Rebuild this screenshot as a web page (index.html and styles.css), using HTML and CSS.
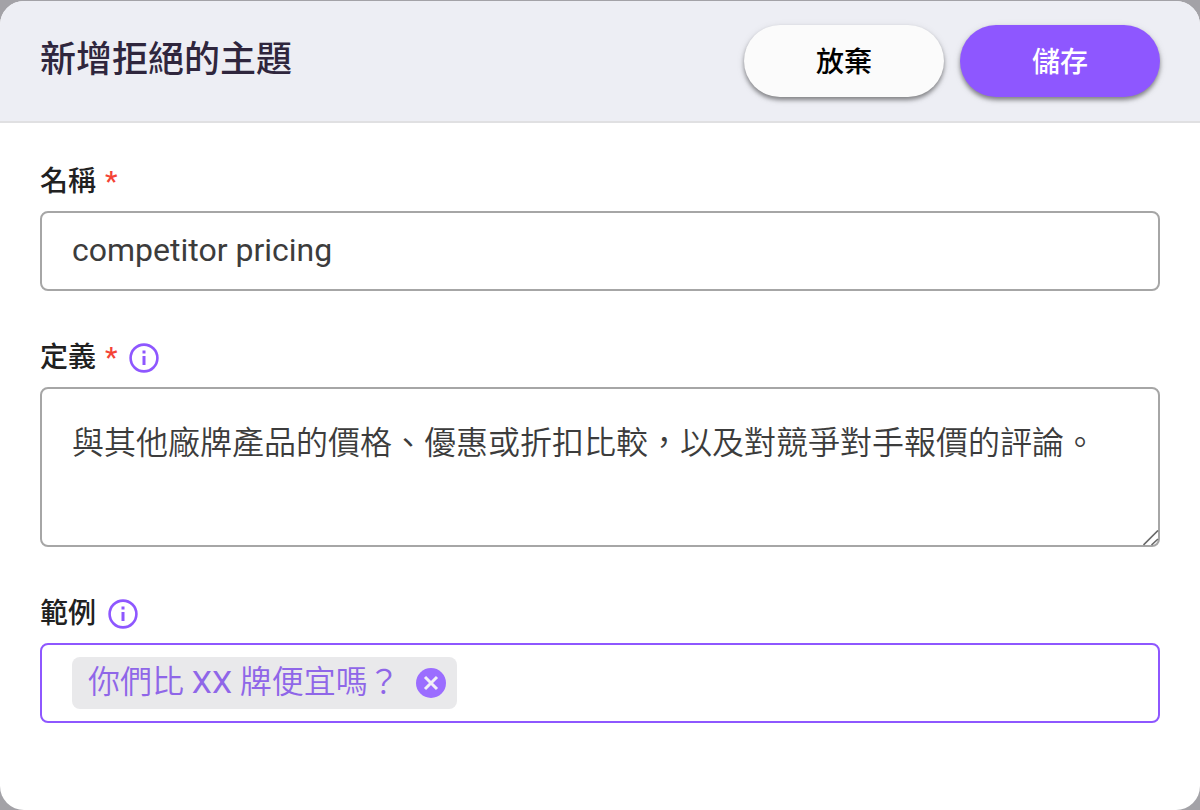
FILE: index.html
```html
<!DOCTYPE html>
<html lang="zh-Hant">
<head>
  <meta charset="UTF-8">
  <meta name="viewport" content="width=device-width, initial-scale=1.0">
  <title>新增拒絕的主題</title>
  <link rel="stylesheet" href="styles.css">
</head>
<body>
  <form class="dialog">
    <header class="dialog-header">
      <h1 class="dialog-title">新增拒絕的主題</h1>
      <div class="actions">
        <button type="button" class="btn">放棄</button>
        <button type="submit" class="btn btn-primary">儲存</button>
      </div>
    </header>

    <main class="dialog-body">
      <div class="field">
        <div class="field-label">
          <label for="name">名稱</label>
          <span class="required">*</span>
        </div>
        <input type="text" id="name" class="control" value="competitor pricing">
      </div>

      <div class="field">
        <div class="field-label">
          <label for="definition">定義</label>
          <span class="required">*</span>
          <svg class="info" viewBox="0 0 30 30" aria-hidden="true">
            <circle cx="15" cy="15" r="13.4" fill="none" stroke="currentColor" stroke-width="2.6"/>
            <path d="M13.5 7.5h3v3h-3zM13.5 13h3v9h-3z" fill="currentColor"/>
          </svg>
        </div>
        <div class="textarea-wrap">
          <textarea id="definition" class="control control-area">與其他廠牌產品的價格、優惠或折扣比較，以及對競爭對手報價的評論。</textarea>
          <svg class="grip" viewBox="0 0 16 16" aria-hidden="true">
            <path d="M0.5 15L15 0.5M8.5 15L15 9" fill="none" stroke="#6a6a6a" stroke-width="1.7"/>
          </svg>
        </div>
      </div>

      <div class="field">
        <div class="field-label">
          <label for="example">範例</label>
          <svg class="info" viewBox="0 0 30 30" aria-hidden="true">
            <circle cx="15" cy="15" r="13.4" fill="none" stroke="currentColor" stroke-width="2.6"/>
            <path d="M13.5 7.5h3v3h-3zM13.5 13h3v9h-3z" fill="currentColor"/>
          </svg>
        </div>
        <div class="chips">
          <span class="chip">
            <span class="chip-text">你們比 <span class="latin">XX</span> 牌便宜嗎？</span>
            <button type="button" class="chip-remove" aria-label="移除">
              <svg viewBox="0 0 30 30" aria-hidden="true">
                <circle cx="15" cy="15" r="15" fill="#9b6dff"/>
                <path d="M9 9L21 21M21 9L9 21" stroke="#f2f0f7" stroke-width="3"/>
              </svg>
            </button>
          </span>
          <input type="text" id="example" class="chip-input">
        </div>
      </div>
    </main>
  </form>
</body>
</html>
```

FILE: styles.css
```css
* {
  margin: 0;
  padding: 0;
  box-sizing: border-box;
}

body {
  background: #a3a2a7;
  color: #212121;
  font-family: Roboto, "Noto Sans CJK TC", sans-serif;
  padding-top: 1px;
}

button,
input,
textarea {
  font-family: inherit;
}

.dialog {
  display: flex;
  flex-direction: column;
  min-height: calc(100vh - 1px);
  background: #fff;
  border-radius: 24px;
  overflow: hidden;
}

.dialog-header {
  display: flex;
  justify-content: space-between;
  align-items: flex-start;
  padding: 24px 40px;
  background: #edeef4;
  border-bottom: 2px solid #e0e0e2;
}

.dialog-title {
  font-size: 36px;
  font-weight: 500;
  line-height: 70px;
  color: #2f263d;
}

.actions {
  display: flex;
  gap: 16px;
}

.btn {
  width: 200px;
  height: 72px;
  padding-bottom: 2px;
  border: none;
  border-radius: 36px;
  background: #fbfbfb;
  color: #000;
  font-size: 28px;
  font-weight: 500;
  cursor: pointer;
  box-shadow: 0 3px 4px rgba(0, 0, 0, 0.4), 0 2px 8px rgba(0, 0, 0, 0.1);
}

.btn-primary {
  background: #8e57ff;
  color: #fff;
}

.dialog-body {
  display: flex;
  flex-direction: column;
  gap: 40px;
  padding: 32px 40px;
}

.field-label {
  display: flex;
  align-items: flex-start;
  height: 56px;
  font-size: 28px;
  font-weight: 500;
  line-height: 54px;
}

.required {
  margin-left: 9px;
  color: #f44336;
}

.info {
  width: 30px;
  height: 30px;
  margin: 12px 0 0 12px;
  color: #8e57ff;
}

.control {
  display: block;
  width: 100%;
  height: 80px;
  padding: 0 30px 2px;
  border: 2px solid #a6a6a6;
  border-radius: 8px;
  background: #fff;
  color: #3c3c3c;
  font-size: 32px;
  outline: none;
}

.textarea-wrap {
  position: relative;
}

.control-area {
  height: 160px;
  padding: 28px 30px;
  font-weight: 350;
  line-height: 52px;
  resize: none;
}

.grip {
  position: absolute;
  right: 1px;
  bottom: 1px;
  width: 16px;
  height: 16px;
}

.chips {
  display: flex;
  align-items: center;
  height: 80px;
  padding: 0 30px;
  border: 2px solid #8e57ff;
  border-radius: 8px;
}

.chip {
  display: flex;
  align-items: center;
  justify-content: space-between;
  gap: 16px;
  height: 52px;
  padding: 0 11px 0 16px;
  border-radius: 8px;
  background: #e9e9eb;
  color: #8f66e8;
  font-size: 32px;
  font-weight: 350;
  white-space: nowrap;
}

.chip-text {
  height: 52px;
  line-height: 50px;
}

.latin {
  font-weight: 400;
}

.chip-remove {
  width: 30px;
  height: 30px;
  border: none;
  background: none;
  cursor: pointer;
}

.chip-remove svg {
  display: block;
}

.chip-input {
  flex: 1;
  min-width: 0;
  height: 48px;
  border: none;
  outline: none;
  background: none;
  font-size: 32px;
}
```
